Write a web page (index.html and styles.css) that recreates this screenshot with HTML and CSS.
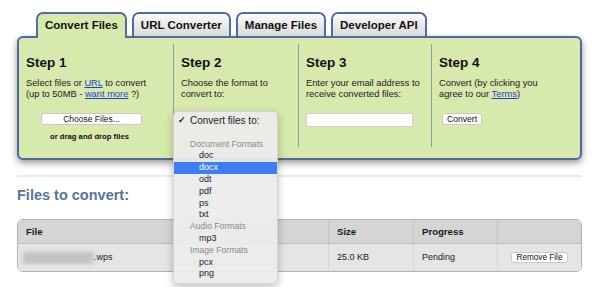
FILE: index.html
```html
<!DOCTYPE html>
<html lang="en">
<head>
    <meta charset="UTF-8">
    <title>Convert Files</title>
    <link rel="stylesheet" href="styles.css">
</head>
<body>
    <div class="page">
        <!-- Tabs -->
        <div class="tabs">
            <div class="tab active">Convert Files</div>
            <div class="tab">URL Converter</div>
            <div class="tab">Manage Files</div>
            <div class="tab">Developer API</div>
        </div>

        <!-- Steps panel -->
        <div class="panel">
            <div class="step step-1">
                <h2>Step 1</h2>
                <p>Select files or <a href="#">URL</a> to convert<br>(up to 50MB - <a href="#">want more</a> ?)</p>
                <button class="btn choose">Choose Files...</button>
                <div class="drop-hint">or drag and drop files</div>
            </div>
            <div class="step step-2">
                <h2>Step 2</h2>
                <p>Choose the format to<br>convert to:</p>
                <!-- open format menu -->
                <div class="format-menu">
                    <div class="menu-item checked"><span class="check">✓</span>Convert files to:</div>
                    <div class="menu-item"></div>
                    <div class="menu-group">Document Formats</div>
                    <div class="menu-item option">doc</div>
                    <div class="menu-item option selected">docx</div>
                    <div class="menu-item option">odt</div>
                    <div class="menu-item option">pdf</div>
                    <div class="menu-item option">ps</div>
                    <div class="menu-item option">txt</div>
                    <div class="menu-group">Audio Formats</div>
                    <div class="menu-item option">mp3</div>
                    <div class="menu-group">Image Formats</div>
                    <div class="menu-item option">pcx</div>
                    <div class="menu-item option">png</div>
                </div>
            </div>
            <div class="step step-3">
                <h2>Step 3</h2>
                <p>Enter your email address to<br>receive converted files:</p>
                <input type="text" class="email">
            </div>
            <div class="step step-4">
                <h2>Step 4</h2>
                <p>Convert (by clicking you<br>agree to our <a href="#">Terms</a>)</p>
                <button class="btn convert">Convert</button>
            </div>
        </div>

        <div class="divider"></div>

        <h1 class="files-title">Files to convert:</h1>

        <!-- Files table -->
        <div class="file-table">
            <div class="table-row table-head">
                <div class="cell">File</div>
                <div class="cell">Size</div>
                <div class="cell">Progress</div>
                <div class="cell"></div>
            </div>
            <div class="table-row table-body">
                <div class="cell name-cell"><span class="blurred"></span>.wps</div>
                <div class="cell">25.0 KB</div>
                <div class="cell">Pending</div>
                <div class="cell action-cell"><button class="btn remove">Remove File</button></div>
            </div>
        </div>
    </div>
</body>
</html>
```

FILE: styles.css
```css
* {
    box-sizing: border-box;
}

html,
body {
    min-height: 100vh;
}

body {
    margin: 0;
    background-color: white;
    font-family: "Liberation Sans", Arial, sans-serif;
    color: #1a1a1a;
}

.page {
    width: 583px;
    min-height: 287px;
    padding: 12px 0 0 17px;
}

/* Tabs */
.tabs {
    display: flex;
    gap: 5px;
    margin-left: 19px;
    margin-bottom: -2px;
    position: relative;
    z-index: 1;
}

.tab {
    height: 24px;
    margin-bottom: 2px;
    padding: 2px 7px 1px;
    line-height: 19px;
    font-size: 11.5px;
    font-weight: bold;
    color: #111;
    border: 2px solid #4f6ca6;
    border-bottom: 0;
    border-radius: 7px 7px 0 0;
    background: linear-gradient(#fbfbfb, #d9d9d9);
}

.tab.active {
    height: 26px;
    margin-bottom: 0;
    background: #d8e9ad;
}

/* Steps panel */
.panel {
    display: flex;
    width: 565px;
    padding: 6px 0 11px;
    background-color: #d8e9ad;
    border: 2px solid #4d6aa4;
    border-radius: 6px;
    box-shadow: 0 3px 7px rgba(0, 0, 0, 0.4);
}

.step {
    height: 103px;
    padding: 11px 0 0 7px;
    border-left: 1px solid #9a9a9a;
}

.step-1 {
    width: 154px;
    border-left: 0;
}

.step-2 {
    width: 125px;
    position: relative;
}

.step-3 {
    width: 133px;
}

.step-4 {
    flex: 1;
}

.step h2 {
    margin: 0 0 6.5px;
    font-size: 13.5px;
    line-height: 16px;
    font-weight: bold;
    color: #111;
}

.step p {
    margin: 0;
    font-size: 9.3px;
    line-height: 11.5px;
}

.step a {
    color: #1e3fcc;
}

.btn {
    display: block;
    height: 12px;
    padding: 0;
    font-family: "Liberation Sans", Arial, sans-serif;
    color: #111;
    line-height: 10px;
    background-color: white;
    border: 1px solid #c9c9c9;
    border-radius: 3px;
}

.choose {
    width: 101px;
    margin: 12px 0 0 15px;
    font-size: 8.5px;
}

.drop-hint {
    width: 101px;
    margin: 7px 0 0 15px;
    padding-right: 4px;
    text-align: center;
    font-size: 7.7px;
    line-height: 9px;
    font-weight: bold;
    color: #111;
}

.email {
    display: block;
    width: 107px;
    height: 14px;
    margin-top: 12px;
    border: 1px solid #d0d0d0;
    background-color: white;
}

.convert {
    width: 40px;
    margin: 12px 0 0 3px;
    font-size: 8.6px;
}

/* Open select menu over the page */
.format-menu {
    position: absolute;
    left: -1px;
    top: 67px;
    z-index: 2;
    width: 105px;
    padding: 3px 0;
    background-color: rgba(236, 236, 236, 0.94);
    border: 1px solid rgba(0, 0, 0, 0.1);
    border-radius: 5px;
    box-shadow: 0 3px 9px rgba(0, 0, 0, 0.25);
}

.menu-item,
.menu-group {
    height: 11.8px;
    line-height: 11.8px;
    white-space: nowrap;
}

.menu-item {
    padding-left: 16px;
    font-size: 9px;
    color: #1a1a1a;
}

.menu-item.checked {
    position: relative;
    font-size: 10px;
}

.check {
    position: absolute;
    left: 4px;
    font-size: 9px;
    font-weight: bold;
}

.menu-group {
    padding-left: 16px;
    font-size: 8.6px;
    color: #8a8a8a;
}

.menu-item.option {
    padding-left: 25px;
}

.menu-item.selected {
    background-color: #3c7ff3;
    color: white;
}

/* Files list */
.divider {
    width: 565px;
    height: 2px;
    margin-top: 15px;
    background-color: #ebebeb;
}

.files-title {
    margin: 10px 0 15px;
    font-size: 14.5px;
    line-height: 17px;
    font-weight: bold;
    color: #5673a0;
}

.file-table {
    width: 565px;
    border: 1px solid #b3b3b3;
    border-radius: 6px;
    overflow: hidden;
}

.table-row {
    display: grid;
    grid-template-columns: 310px 85px 84px 1fr;
}

.cell {
    padding-left: 8px;
    border-left: 1px solid #c4c4c4;
}

.cell:first-child {
    border-left: 0;
}

.table-head {
    height: 24px;
    background-color: #d5d5d5;
    border-bottom: 1px solid #bdbdbd;
    font-size: 9.6px;
    font-weight: bold;
    line-height: 23px;
}

.table-body {
    height: 27px;
    background-color: #e5e5e5;
    font-size: 9px;
    line-height: 27px;
}

.table-body .cell {
    border-left-color: #d6d6d6;
}

.name-cell {
    display: flex;
    align-items: center;
    padding-left: 5px;
}

.blurred {
    display: inline-block;
    width: 71px;
    height: 12px;
    background-color: #c2c2c2;
    filter: blur(2px);
}

.action-cell {
    display: flex;
    align-items: center;
    justify-content: center;
    padding-left: 0;
}

.remove {
    width: 57px;
    height: 11px;
    line-height: 9px;
    font-size: 8.2px;
}
```
